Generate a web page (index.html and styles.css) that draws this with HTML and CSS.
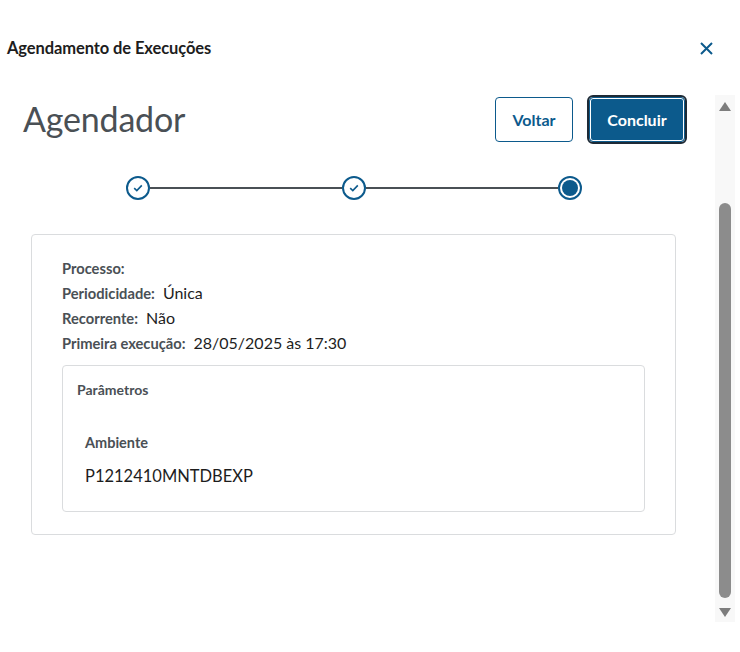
FILE: index.html
```html
<!doctype html>
<html lang="pt-BR">
    <head>
        <meta charset="UTF-8" />
        <meta name="viewport" content="width=device-width, initial-scale=1.0" />
        <title>Agendamento de Execuções</title>
        <link rel="stylesheet" href="styles.css">
    </head>
    <body>
        <div class="modal">
            <div class="modal-header">
                <span class="modal-title">Agendamento de Execuções</span>
                <button class="modal-close" aria-label="Fechar">
                    <svg width="13" height="13" viewBox="0 0 13 13">
                        <path d="M1 1 L12 12 M12 1 L1 12" stroke="#0c5a8c" stroke-width="2" fill="none" />
                    </svg>
                </button>
            </div>
            <div class="modal-body">
                <div class="modal-content">
                    <div class="page-head">
                        <h1 class="page-title">Agendador</h1>
                        <div class="page-actions">
                            <button class="btn btn-secondary">Voltar</button>
                            <button class="btn btn-primary">Concluir</button>
                        </div>
                    </div>

                    <div class="stepper">
                        <span class="step step-done">
                            <svg width="10" height="8" viewBox="0 0 10 8">
                                <path d="M1.2 4.2 L3.8 6.6 L8.8 1.4" stroke="#0c5a8c" stroke-width="1.6" fill="none" />
                            </svg>
                        </span>
                        <span class="step-line"></span>
                        <span class="step step-done">
                            <svg width="10" height="8" viewBox="0 0 10 8">
                                <path d="M1.2 4.2 L3.8 6.6 L8.8 1.4" stroke="#0c5a8c" stroke-width="1.6" fill="none" />
                            </svg>
                        </span>
                        <span class="step-line"></span>
                        <span class="step step-active"><span class="step-dot"></span></span>
                    </div>

                    <div class="summary">
                        <div class="summary-row"><span class="label">Processo:</span></div>
                        <div class="summary-row"><span class="label">Periodicidade:</span><span class="value">Única</span></div>
                        <div class="summary-row"><span class="label">Recorrente:</span><span class="value">Não</span></div>
                        <div class="summary-row"><span class="label">Primeira execução:</span><span class="value">28/05/2025 às 17:30</span></div>

                        <div class="params">
                            <div class="params-title">Parâmetros</div>
                            <div class="param">
                                <div class="param-label">Ambiente</div>
                                <div class="param-value">P1212410MNTDBEXP</div>
                            </div>
                        </div>
                    </div>
                </div>

                <div class="scrollbar">
                    <span class="scroll-arrow scroll-up"></span>
                    <div class="scroll-track">
                        <div class="scroll-thumb"></div>
                    </div>
                    <span class="scroll-arrow scroll-down"></span>
                </div>
            </div>
        </div>
    </body>
</html>
```

FILE: styles.css
```css
* {
    padding: 0;
    margin: 0;
    box-sizing: border-box;
}

body {
    font-family: "Lato", "Noto Sans", sans-serif;
    background-color: #ffffff;
    color: #1d1d1d;
    width: 740px;
    height: 652px;
    overflow: hidden;
}

button {
    font-family: inherit;
    cursor: pointer;
}

.modal-header {
    display: flex;
    align-items: center;
    justify-content: space-between;
    height: 20px;
    margin-top: 38px;
    padding: 0 27px 0 7px;
}

.modal-title {
    font-size: 16.5px;
    font-weight: 700;
    color: #1d1d1d;
    letter-spacing: -0.1px;
}

.modal-close {
    border: none;
    background: none;
    display: flex;
    align-items: center;
}

.modal-body {
    display: flex;
    margin-top: 37px;
}

.modal-content {
    width: 715px;
}

.page-head {
    display: flex;
    align-items: center;
    justify-content: space-between;
    height: 49px;
    padding: 0 30px 0 23px;
}

.page-title {
    font-size: 34px;
    font-weight: 400;
    color: #4a5055;
    letter-spacing: -0.2px;
    margin-top: -2px;
}

.page-actions {
    display: flex;
    align-items: center;
    gap: 16px;
}

.btn {
    height: 45px;
    border-radius: 4px;
    font-size: 16px;
    font-weight: 700;
}

.btn-secondary {
    width: 78px;
    background: #ffffff;
    color: #0c5a8c;
    border: 1px solid #0c5a8c;
}

.btn-primary {
    width: 96px;
    background: #0c5a8c;
    color: #ffffff;
    border: 1px solid #0c5a8c;
    outline: 2px solid #1d2a36;
    outline-offset: 0;
    box-shadow: inset 0 0 0 1px #ffffff;
}

.stepper {
    display: flex;
    align-items: center;
    margin: 32px 0 0 126px;
    width: 456px;
}

.step {
    flex: none;
    width: 24px;
    height: 24px;
    border-radius: 50%;
    border: 2px solid #0c5a8c;
    background: #ffffff;
    display: flex;
    align-items: center;
    justify-content: center;
}

.step-dot {
    width: 16px;
    height: 16px;
    border-radius: 50%;
    background: #0c5a8c;
}

.step-line {
    flex: 1;
    height: 2px;
    background: #4a5055;
}

.summary {
    margin: 34px 39px 0 31px;
    border: 1px solid #dadcde;
    border-radius: 4px;
    padding: 20px 30px 22px 30px;
}

.summary-row {
    display: flex;
    align-items: center;
    height: 25px;
}

.label {
    font-size: 14.7px;
    font-weight: 700;
    color: #4a5055;
}

.value {
    font-size: 16px;
    margin-left: 8px;
    color: #1d1d1d;
}

.params {
    margin-top: 10px;
    border: 1px solid #dadcde;
    border-radius: 4px;
    padding: 15px 14px 24px 14px;
}

.params-title {
    font-size: 14px;
    font-weight: 700;
    color: #4a5055;
    line-height: 18px;
}

.param {
    padding: 35px 0 0 8px;
}

.param-label {
    font-size: 14.5px;
    font-weight: 700;
    color: #4a5055;
    line-height: 18px;
}

.param-value {
    font-size: 16.5px;
    color: #1d1d1d;
    margin-top: 13px;
    line-height: 22px;
}

.scrollbar {
    width: 20px;
    height: 527px;
    background: #f8f8f8;
    display: flex;
    flex-direction: column;
    align-items: center;
}

.scroll-arrow {
    width: 0;
    height: 0;
    border-left: 6px solid transparent;
    border-right: 6px solid transparent;
}

.scroll-up {
    margin-top: 7px;
    border-bottom: 9px solid #7d7d7d;
}

.scroll-down {
    margin: 10px 0 5px;
    border-top: 9px solid #7d7d7d;
}

.scroll-track {
    flex: 1;
    width: 100%;
    display: flex;
    justify-content: center;
    padding-top: 92px;
}

.scroll-thumb {
    width: 12px;
    height: 395px;
    border-radius: 6px;
    background: #8c8c8c;
}
```
